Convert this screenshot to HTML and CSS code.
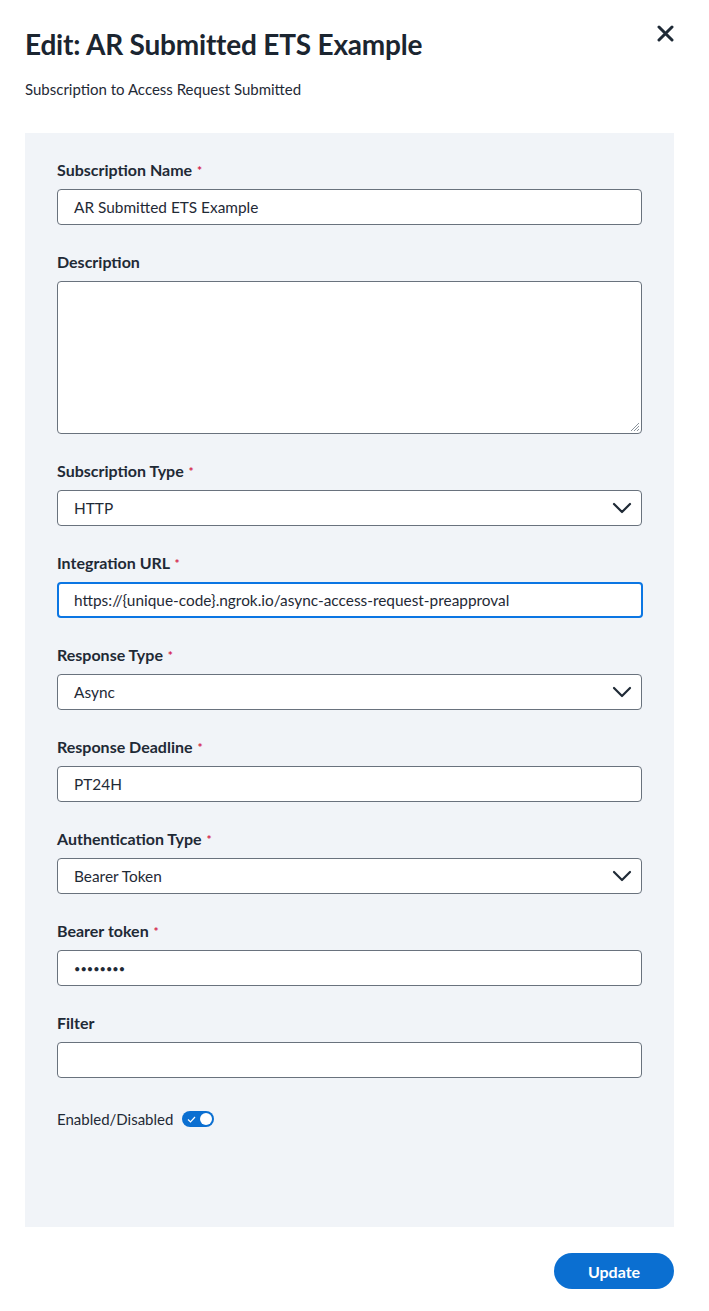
FILE: index.html
```html
<!DOCTYPE html>
<html>
<head>
<meta charset="utf-8">
<link rel="stylesheet" href="styles.css">
</head>
<body>
<div class="modal">
  <div class="header">
    <h1 class="title">Edit: AR Submitted ETS Example</h1>
    <button class="close" aria-label="Close">
      <svg width="17" height="17" viewBox="0 0 17 17"><path d="M2 2 L15 15 M15 2 L2 15" stroke="#1f2a36" stroke-width="3" stroke-linecap="round"/></svg>
    </button>
  </div>
  <p class="subtitle">Subscription to Access Request Submitted</p>

  <div class="panel">
    <div class="field">
      <div class="label">Subscription Name <span class="req">*</span></div>
      <div class="input">AR Submitted ETS Example</div>
    </div>
    <div class="field">
      <div class="label">Description</div>
      <div class="input textarea">
        <svg class="grip" width="12" height="12" viewBox="0 0 12 12"><path d="M11 3 L3 11 M11 6 L6 11 M11 9 L9 11" stroke="#8a939c" stroke-width="1"/></svg>
      </div>
    </div>
    <div class="field">
      <div class="label">Subscription Type <span class="req">*</span></div>
      <div class="input select">HTTP<svg class="chev" width="20" height="12" viewBox="0 0 20 12"><path d="M2 2 L10 10 L18 2" fill="none" stroke="#1f2a36" stroke-width="2.2" stroke-linecap="round" stroke-linejoin="round"/></svg></div>
    </div>
    <div class="field">
      <div class="label">Integration URL <span class="req">*</span></div>
      <div class="input focus">https://{unique-code}.ngrok.io/async-access-request-preapproval</div>
    </div>
    <div class="field">
      <div class="label">Response Type <span class="req">*</span></div>
      <div class="input select">Async<svg class="chev" width="20" height="12" viewBox="0 0 20 12"><path d="M2 2 L10 10 L18 2" fill="none" stroke="#1f2a36" stroke-width="2.2" stroke-linecap="round" stroke-linejoin="round"/></svg></div>
    </div>
    <div class="field">
      <div class="label">Response Deadline <span class="req">*</span></div>
      <div class="input">PT24H</div>
    </div>
    <div class="field">
      <div class="label">Authentication Type <span class="req">*</span></div>
      <div class="input select">Bearer Token<svg class="chev" width="20" height="12" viewBox="0 0 20 12"><path d="M2 2 L10 10 L18 2" fill="none" stroke="#1f2a36" stroke-width="2.2" stroke-linecap="round" stroke-linejoin="round"/></svg></div>
    </div>
    <div class="field">
      <div class="label">Bearer token <span class="req">*</span></div>
      <div class="input dots">••••••••</div>
    </div>
    <div class="field">
      <div class="label">Filter</div>
      <div class="input"></div>
    </div>
    <div class="toggle-row">
      <span>Enabled/Disabled</span>
      <span class="toggle">
        <svg class="tick" width="9" height="7" viewBox="0 0 9 7"><path d="M1 3.5 L3.5 6 L8 1" fill="none" stroke="#fff" stroke-width="1.2"/></svg>
        <span class="knob"></span>
      </span>
    </div>
  </div>

  <div class="footer">
    <button class="update">Update</button>
  </div>
</div>
</body>
</html>
```

FILE: styles.css
```css
* { box-sizing: border-box; }
body {
  margin: 0;
  background: #fff;
  font-family: "Lato", "Liberation Sans", sans-serif;
  color: #1f2a36;
}
.modal {
  padding: 0 35px 0 25px;
}
.header {
  display: flex;
  justify-content: space-between;
  align-items: flex-start;
}
.title {
  margin: 28px 0 0 0;
  font-size: 28px;
  line-height: 32px;
  font-weight: 700;
  color: #1b2530;
  letter-spacing: -0.2px;
}
.close {
  margin: 25px 0 0 0;
  padding: 0;
  border: 0;
  background: none;
  width: 17px;
  height: 17px;
  display: flex;
}
.subtitle {
  margin: 20px 0 0 0;
  font-size: 15px;
  line-height: 18px;
}
.panel {
  margin-top: 35px;
  background: #f1f4f8;
  padding: 27px 32px 99px 32px;
}
.field {
  margin-bottom: 27px;
}
.label {
  height: 20px;
  font-size: 16px;
  line-height: 20px;
  font-weight: 700;
  margin-bottom: 9px;
  color: #1f2a36;
}
.req {
  color: #d4214b;
  font-size: 12px;
  line-height: 1;
  vertical-align: 1px;
  margin-left: 1px;
}
.input {
  height: 36px;
  background: #fff;
  border: 1px solid #69727d;
  border-radius: 4px;
  padding: 0 16px;
  font-size: 15.4px;
  display: flex;
  align-items: center;
  color: #1f2a36;
  position: relative;
}
.textarea {
  height: 153px;
}
.grip {
  position: absolute;
  right: 1px;
  bottom: 1px;
}
.select {
  justify-content: space-between;
}
.chev { margin-right: -7px; }
.focus {
  border: 2px solid #0b76e3;
  padding-left: 15px;
  margin-right: -1px;
}
.dots {
  font-size: 11px;
}
.toggle-row {
  display: flex;
  align-items: center;
  gap: 9px;
  font-size: 15px;
  margin-top: 32px;
}
.toggle {
  position: relative;
  width: 32px;
  height: 16px;
  border-radius: 8px;
  background: #0b6fd1;
  display: inline-block;
}
.tick {
  position: absolute;
  left: 5px;
  top: 5px;
}
.knob {
  position: absolute;
  right: 2px;
  top: 2px;
  width: 12px;
  height: 12px;
  border-radius: 50%;
  background: #fff;
}
.footer {
  display: flex;
  justify-content: flex-end;
  margin-top: 26px;
}
.update {
  width: 120px;
  height: 36px;
  border: 0;
  border-radius: 18px;
  background: #0b6fd1;
  color: #fff;
  font-family: "Lato", "Liberation Sans", sans-serif;
  font-weight: 700;
  font-size: 16px;
}
```
